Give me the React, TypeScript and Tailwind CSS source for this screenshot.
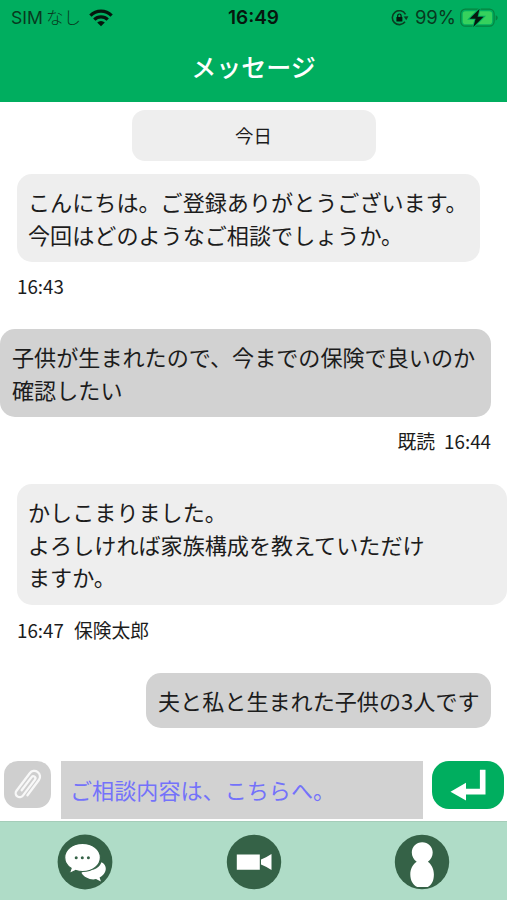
import type { ReactNode } from "react";
import clsx from "clsx";

type BubbleProps = {
  mine?: boolean;
  className?: string;
  lines: string[];
};

function Bubble({ mine, className, lines }: BubbleProps) {
  return (
    <div
      className={clsx(
        "rounded-[15px] px-[11px] pt-[11px] text-[22.1px] leading-[32.7px] whitespace-nowrap text-[#1c1c1c]",
        mine ? "self-end bg-[#d2d2d2]" : "self-start bg-[#eeeeee]",
        className
      )}
    >
      {lines.map((line) => (
        <p key={line}>{line}</p>
      ))}
    </div>
  );
}

function Meta({ className, children }: { className?: string; children: ReactNode }) {
  return (
    <div className={clsx("flex h-7 items-center text-[18.8px] leading-7 text-[#1c1c1c]", className)}>
      {children}
    </div>
  );
}

function WifiIcon() {
  return (
    <svg width="24" height="18" viewBox="0 0 24 18" fill="none" stroke="#06170e" strokeWidth="3.3">
      <path d="M1.4 6.6a15 15 0 0 1 21.2 0" />
      <path d="M5.3 10.7a9.5 9.5 0 0 1 13.4 0" />
      <path d="M12 17.3 8.2 13.5a5.4 5.4 0 0 1 7.6 0Z" fill="#06170e" stroke="none" />
    </svg>
  );
}

function RotationLockIcon() {
  return (
    <svg width="18" height="16" viewBox="0 0 18 16" fill="none">
      <path d="M14.5 4.3A7 7 0 1 0 14 11.8" stroke="#0b3d22" strokeWidth="1.6" />
      <path d="m12.6 6.5 4.8-.2-2.1 3.9Z" fill="#0b3d22" />
      <rect x="5.4" y="7" width="6" height="4.6" rx=".6" fill="#06170e" />
      <path d="M6.7 7.2V5.7a1.7 1.7 0 0 1 3.4 0v1.5" stroke="#06170e" strokeWidth="1.2" />
    </svg>
  );
}

function BatteryIcon() {
  return (
    <svg width="38" height="20" viewBox="0 0 38 20" fill="none">
      <rect x=".7" y="1.2" width="33.4" height="17" rx="4.6" stroke="#06813f" strokeWidth="1.2" />
      <rect x="2.7" y="3.2" width="29.4" height="13" rx="2.8" fill="#36d15d" />
      <path d="M35.7 7.2c1.5.5 2 1.4 2 2.6s-.5 2.1-2 2.6Z" fill="#06813f" />
      <path
        d="M19.6.8 9.6 10.8h6l-2.3 8.3L23.6 8.8h-6Z"
        fill="#06170e"
        stroke="#00ae5f"
        strokeWidth="2"
        paintOrder="stroke"
      />
    </svg>
  );
}

function ClipIcon() {
  return (
    <svg width="32" height="36" viewBox="-16 -18 32 36" fill="none" stroke="#f8f8f8" strokeWidth="2.3" strokeLinecap="round">
      <path
        d="M5.7 8.5V-10.5A5.7 5.7 0 0 0-5.7-10.5V11.5a4 4 0 0 0 8 0V-8.5a2.1 2.1 0 0 0-4.2 0V8"
        transform="rotate(37)"
      />
    </svg>
  );
}

function ReturnIcon() {
  return (
    <svg width="36" height="32" viewBox="0 0 36 32" fill="#fff">
      <path d="M29.9.7h5.6V25.4H16v6.2L.5 22.8 16 13.8v6h13.9Z" />
    </svg>
  );
}

function ChatTabIcon() {
  return (
    <svg width="56" height="56" viewBox="0 0 56 56">
      <circle cx="28" cy="28" r="27.4" fill="#356247" />
      <path
        d="M34 36.2c-4 .2-7.5 1.1-9.6 2.6 2.7 5 9.4 7.5 14.6 6.3l4.9 2.4-1.3-4c4.7-2.7 7.2-7 5.8-11-.5-1.7-1.9-3.2-4-4.2-1.4 4.4-5.4 7.2-10.4 7.9Z"
        fill="#fff"
      />
      <path
        d="M25.5 9.4C15.3 9.4 7.7 15.6 7.7 23.4c0 4.6 2.6 8.4 6.4 10.9l-1.8 5.3 6.600-3.100c2.200.7 4.300 1 6.600 1 10.200 0 17.900-6.300 17.900-14.100S35.700 9.400 25.500 9.400Z"
        fill="#fff"
        stroke="#356247"
        strokeWidth="1.2"
      />
      <g fill="#356247">
        <circle cx="19.2" cy="23.7" r="1.5" />
        <circle cx="25.3" cy="23.7" r="1.5" />
        <circle cx="31.4" cy="23.7" r="1.5" />
      </g>
    </svg>
  );
}

function VideoTabIcon() {
  return (
    <svg width="56" height="56" viewBox="0 0 56 56">
      <circle cx="28" cy="28" r="27.2" fill="#356247" />
      <path d="M10.8 20.5h23v15.300h-23ZM35 25.600l5-2.300 5.500-3.200v15.800l-5.500-3.200-5-2.300Z" fill="#fff" />
    </svg>
  );
}

function ProfileTabIcon() {
  return (
    <svg width="56" height="56" viewBox="0 0 56 56">
      <circle cx="28" cy="28" r="27.2" fill="#356247" />
      <path
        d="M28.2 8.3c-5.9 0-10.4 4.7-10.4 10.3 0 4 2 7.2 4.9 9.2-3.900 2.600-6.400 7.200-6.400 12.700 0 6.500 3.200 10.900 6.900 12.500h10.500c3.700-1.600 6.200-6 6.200-12.500 0-5.500-2.500-10.100-6-12.700 2.900-2 4.800-5.200 4.800-9.200 0-5.600-4.600-10.300-10.500-10.300Z"
        fill="#fff"
      />
    </svg>
  );
}

export default function App() {
  return (
    <div className="flex h-[900px] w-[507px] flex-col overflow-hidden bg-white font-['Noto_Sans_CJK_JP',sans-serif]">
      <header className="h-[102px] shrink-0 bg-[#00ae5f]">
        {/* Status bar */}
        <div className="grid h-[34px] grid-cols-3 items-center pt-px font-['Inter','Noto_Sans_CJK_JP',sans-serif] text-[17px] leading-[33px] text-[#083a20]">
          <div className="flex items-center pl-[11px]">
            <span className="text-[17.6px]">SIM</span>
            <span className="ml-[3px] text-[17.5px] font-light whitespace-nowrap">なし</span>
            <span className="ml-[8px]">
              <WifiIcon />
            </span>
          </div>
          <div className="text-center text-[19px] font-semibold text-[#06170e]">16:49</div>
          <div className="flex items-center justify-end pr-[9px]">
            <RotationLockIcon />
            <span className="mr-[4px] ml-[6px] text-[18.5px]">99%</span>
            <BatteryIcon />
          </div>
        </div>
        <h1 className="text-center text-[25px] leading-[64px] font-medium text-white">メッセージ</h1>
      </header>

      <main className="flex h-[659px] shrink-0 flex-col">
        <div className="mt-[8px] flex h-[51px] w-[244px] shrink-0 items-center justify-center self-center rounded-[13px] bg-[#eeeeee] text-[18.4px] text-[#1c1c1c]">
          今日
        </div>

        <Bubble
          className="mt-[13px] ml-[17px] h-[88px] w-[463px]"
          lines={["こんにちは。ご登録ありがとうございます。", "今回はどのようなご相談でしょうか。"]}
        />
        <Meta className="mt-[10px] ml-[17px]">16:43</Meta>

        <Bubble
          mine
          className="mt-[29px] mr-[16px] h-[88px] w-[491px] pl-[12px]"
          lines={["子供が生まれたので、今までの保険で良いのか", "確認したい"]}
        />
        <Meta className="mt-[10px] mr-[16px] justify-end gap-[9px]">
          <span>既読</span>
          <span>16:44</span>
        </Meta>

        <Bubble
          className="mt-[29px] ml-[17px] h-[121px] w-[490px]"
          lines={["かしこまりました。", "よろしければ家族構成を教えていただけ", "ますか。"]}
        />
        <Meta className="mt-[11px] ml-[17px] gap-[10px]">
          <span>16:47</span>
          <span>保険太郎</span>
        </Meta>

        <Bubble
          mine
          className="mt-[29px] mr-[16px] h-[55px] w-[345px] pt-[10px] pl-[12px]"
          lines={["夫と私と生まれた子供の3人です"]}
        />
      </main>

      {/* Composer */}
      <div className="flex h-[60px] shrink-0 items-start pl-1">
        <button className="flex h-[47px] w-[47px] items-center justify-center rounded-[14px] bg-[#cfcfcf]">
          <ClipIcon />
        </button>
        <div className="ml-[10px] flex h-[58px] w-[362px] items-center bg-[#d2d2d2] pl-[9px] text-[22.1px] text-[#7472fa]">
          ご相談内容は、こちらへ。
        </div>
        <button className="ml-[9px] flex h-[48px] w-[72px] items-center justify-center rounded-[17px] bg-[#00ae5f]">
          <ReturnIcon />
        </button>
      </div>

      <nav className="flex grow justify-between border-t border-[#a5cdb9] bg-[#afdcc7] pt-[12px] pr-[57px] pl-[57px]">
        <ChatTabIcon />
        <VideoTabIcon />
        <ProfileTabIcon />
      </nav>
    </div>
  );
}
